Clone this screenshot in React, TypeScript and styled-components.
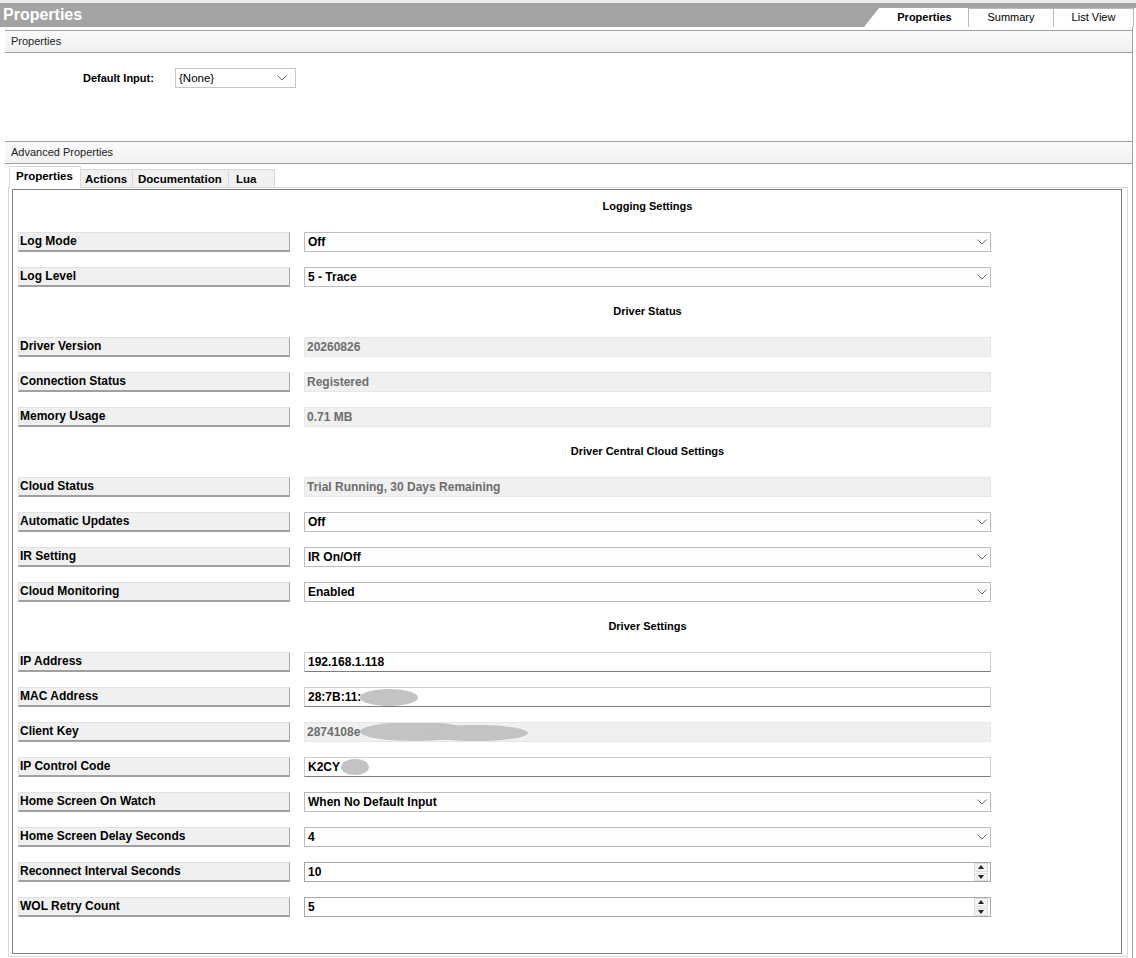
import React from "react";
import styled, { createGlobalStyle } from "styled-components";

const GlobalStyle = createGlobalStyle`
  html, body {
    margin: 0;
    padding: 0;
    background: #fff;
  }
  body {
    font-family: "Liberation Sans", Arial, sans-serif;
    font-size: 12px;
    color: #000;
  }
`;

const Page = styled.div`
  width: 1136px;
  height: 958px;
  overflow: hidden;
  background: #fff;
  border-top: 3px solid #ececec;
  box-sizing: border-box;
`;

const TitleBar = styled.div`
  height: 24px;
  background: #a3a3a3;
  display: flex;
  justify-content: space-between;
  align-items: flex-end;
`;

const Title = styled.div`
  color: #fff;
  font-weight: bold;
  font-size: 16px;
  line-height: 24px;
  padding-left: 3px;
  align-self: stretch;
`;

const TopTabs = styled.div`
  width: 272px;
  height: 19px;
  background: #fff;
  display: flex;
  padding-left: 16px;
  box-sizing: border-box;
  clip-path: polygon(15px 0, 100% 0, 100% 100%, 0 100%);
`;

const TopTab = styled.div<{ $active?: boolean; $w: number; $last?: boolean }>`
  width: ${(p) => p.$w}px;
  box-sizing: border-box;
  font-size: 11px;
  font-weight: ${(p) => (p.$active ? "bold" : "normal")};
  line-height: 17px;
  text-align: center;
  border-top: 1px solid ${(p) => (p.$active ? "transparent" : "#b9b9b9")};
  border-left: 1px solid ${(p) => (p.$active ? "transparent" : "#b9b9b9")};
  border-right: ${(p) => (p.$last ? "1px solid #b9b9b9" : "none")};
`;

const Body = styled.div`
  width: 1133px;
  box-sizing: border-box;
  border-right: 1px solid #a0a0a0;
  padding-left: 5px;
  padding-top: 3px;
  height: 931px;
`;

const SectionHeader = styled.div`
  height: 21px;
  border-top: 1px solid #a0a0a0;
  border-bottom: 1px solid #a0a0a0;
  background: linear-gradient(#fbfbfb, #f1f1f1);
  font-size: 11px;
  color: #222;
  line-height: 20px;
  padding-left: 6px;
`;

const DefaultArea = styled.div`
  height: 88px;
  padding: 15px 0 0 78px;
  box-sizing: border-box;
  display: flex;
  align-items: flex-start;
`;

const DefaultLabel = styled.div`
  width: 92px;
  font-size: 11px;
  font-weight: bold;
  line-height: 21px;
`;

const SmallSelect = styled.div`
  width: 121px;
  height: 20px;
  box-sizing: border-box;
  border: 1px solid #c6c6c6;
  background: #fff;
  font-size: 11.5px;
  line-height: 18px;
  padding: 0 7px 0 3px;
  display: flex;
  justify-content: space-between;
  align-items: center;
`;

const TabControl = styled.div`
  margin-left: 3px;
  margin-top: 2px;
  width: 1120px;
`;

const InnerTabs = styled.div`
  height: 21px;
  display: flex;
  align-items: flex-end;
  padding-left: 1px;
`;

const InnerTab = styled.div<{ $active?: boolean; $w: number; $pad: number }>`
  width: ${(p) => p.$w}px;
  box-sizing: border-box;
  height: ${(p) => (p.$active ? 22 : 18)}px;
  margin-bottom: ${(p) => (p.$active ? -1 : 0)}px;
  position: relative;
  z-index: ${(p) => (p.$active ? 1 : 0)};
  padding-left: ${(p) => p.$pad}px;
  font-size: 11.5px;
  font-weight: bold;
  line-height: ${(p) => (p.$active ? 19 : 18)}px;
  background: ${(p) => (p.$active ? "#fff" : "#f0f0f0")};
  border: 1px solid #d9d9d9;
  border-bottom: none;
  border-left: ${(p) => (p.$active ? "1px solid #d9d9d9" : "none")};
`;

const TabPage = styled.div`
  border: 1px solid #d9d9d9;
  background: #fff;
  padding: 1px 5px 2px 3px;
`;

const Panel = styled.div`
  border: 1px solid #828282;
  padding-bottom: 28px;
`;

const Row = styled.div`
  height: 35px;
  padding: 0 0 3px 5px;
  box-sizing: border-box;
  display: grid;
  grid-template-columns: 272px 687px;
  column-gap: 14px;
  align-items: center;
`;

const Heading = styled.div`
  grid-column: 2;
  text-align: center;
  font-size: 11px;
  font-weight: bold;
`;

const Label = styled.div`
  height: 20px;
  margin-top: 2px;
  box-sizing: border-box;
  background: #f0f0f0;
  border-top: 1px solid #e2e2e2;
  border-left: 1px solid #e2e2e2;
  border-right: 1px solid #a9a9a9;
  border-bottom: 2px solid #a0a0a0;
  font-weight: bold;
  line-height: 16px;
  padding-left: 1px;
  white-space: nowrap;
`;

const Field = styled.div<{ $kind: "select" | "readonly" | "text" | "spin" }>`
  height: 20px;
  margin-top: 2px;
  box-sizing: border-box;
  display: flex;
  align-items: center;
  justify-content: space-between;
  font-weight: bold;
  white-space: nowrap;
  overflow: hidden;
  padding-left: ${(p) => (p.$kind === "readonly" ? 2 : 3)}px;
  padding-right: 2px;
  color: ${(p) => (p.$kind === "readonly" ? "#6d6d6d" : "#000")};
  background: ${(p) =>
    p.$kind === "readonly" ? "#f0f0f0" : p.$kind === "select" ? "#fdfdfd" : "#fff"};
  border: 1px solid
    ${(p) =>
      p.$kind === "readonly"
        ? "#e6e6e6"
        : p.$kind === "select"
        ? "#bdbdbd"
        : p.$kind === "spin"
        ? "#a9a9a9"
        : "#cfcfcf"};
  border-bottom-color: ${(p) =>
    p.$kind === "text" ? "#7d7d7d" : p.$kind === "spin" ? "#a9a9a9" : undefined};
`;

const FieldText = styled.span`
  display: inline-flex;
  align-items: center;
`;

const Chevron = styled.svg`
  width: 10px;
  height: 6px;
  margin-right: 1px;
  flex: none;
`;

const Spinner = styled.div`
  width: 14px;
  height: 18px;
  display: flex;
  flex-direction: column;
  gap: 1px;
  flex: none;
`;

const SpinButton = styled.div`
  flex: 1;
  background: #f4f4f4;
  border: 1px solid #dcdcdc;
  display: flex;
  align-items: center;
  justify-content: center;
`;

const Blob = styled.span<{ $w: number; $h: number; $ml?: number; $mt?: number }>`
  display: inline-block;
  width: ${(p) => p.$w}px;
  height: ${(p) => p.$h}px;
  margin-left: ${(p) => p.$ml ?? 0}px;
  margin-top: ${(p) => p.$mt ?? 0}px;
  border-radius: 50%;
  background: #c3c3c3;
`;

type Item =
  | { type: "heading"; text: string }
  | {
      type: "field";
      label: string;
      kind: "select" | "readonly" | "text" | "spin";
      value: React.ReactNode;
    };

const items: Item[] = [
  { type: "heading", text: "Logging Settings" },
  { type: "field", label: "Log Mode", kind: "select", value: "Off" },
  { type: "field", label: "Log Level", kind: "select", value: "5 - Trace" },
  { type: "heading", text: "Driver Status" },
  { type: "field", label: "Driver Version", kind: "readonly", value: "20260826" },
  { type: "field", label: "Connection Status", kind: "readonly", value: "Registered" },
  { type: "field", label: "Memory Usage", kind: "readonly", value: "0.71 MB" },
  { type: "heading", text: "Driver Central Cloud Settings" },
  {
    type: "field",
    label: "Cloud Status",
    kind: "readonly",
    value: "Trial Running, 30 Days Remaining",
  },
  { type: "field", label: "Automatic Updates", kind: "select", value: "Off" },
  { type: "field", label: "IR Setting", kind: "select", value: "IR On/Off" },
  { type: "field", label: "Cloud Monitoring", kind: "select", value: "Enabled" },
  { type: "heading", text: "Driver Settings" },
  { type: "field", label: "IP Address", kind: "text", value: "192.168.1.118" },
  {
    type: "field",
    label: "MAC Address",
    kind: "text",
    value: (
      <>
        28:7B:11:
        <Blob $w={58} $h={17} $ml={-1} />
      </>
    ),
  },
  {
    type: "field",
    label: "Client Key",
    kind: "readonly",
    value: (
      <>
        2874108e
        <Blob $w={110} $h={19} $ml={0} $mt={-2} />
        <Blob $w={104} $h={16} $ml={-46} $mt={2} />
      </>
    ),
  },
  {
    type: "field",
    label: "IP Control Code",
    kind: "text",
    value: (
      <>
        K2CY
        <Blob $w={28} $h={16} $ml={1} />
      </>
    ),
  },
  {
    type: "field",
    label: "Home Screen On Watch",
    kind: "select",
    value: "When No Default Input",
  },
  { type: "field", label: "Home Screen Delay Seconds", kind: "select", value: "4" },
  { type: "field", label: "Reconnect Interval Seconds", kind: "spin", value: "10" },
  { type: "field", label: "WOL Retry Count", kind: "spin", value: "5" },
];

const ChevronIcon = () => (
  <Chevron viewBox="0 0 10 6">
    <path d="M0.5 0.5 L5 5 L9.5 0.5" fill="none" stroke="#6a6a6a" strokeWidth="1" />
  </Chevron>
);

const SpinArrows = () => (
  <Spinner>
    <SpinButton>
      <svg width="6" height="4" viewBox="0 0 6 4">
        <path d="M0 4 L3 0 L6 4 Z" fill="#222" />
      </svg>
    </SpinButton>
    <SpinButton>
      <svg width="6" height="4" viewBox="0 0 6 4">
        <path d="M0 0 L3 4 L6 0 Z" fill="#222" />
      </svg>
    </SpinButton>
  </Spinner>
);

export default function App() {
  return (
    <>
      <GlobalStyle />
      <Page>
        <TitleBar>
          <Title>Properties</Title>
          <TopTabs>
            <TopTab $active $w={88}>
              Properties
            </TopTab>
            <TopTab $w={85}>Summary</TopTab>
            <TopTab $w={81} $last>
              List View
            </TopTab>
          </TopTabs>
        </TitleBar>
        <Body>
          <SectionHeader>Properties</SectionHeader>
          <DefaultArea>
            <DefaultLabel>Default Input:</DefaultLabel>
            <SmallSelect>
              <span>{"{None}"}</span>
              <ChevronIcon />
            </SmallSelect>
          </DefaultArea>
          <SectionHeader>Advanced Properties</SectionHeader>
          <TabControl>
            <InnerTabs>
              <InnerTab $active $w={72} $pad={6}>
                Properties
              </InnerTab>
              <InnerTab $w={52} $pad={4}>
                Actions
              </InnerTab>
              <InnerTab $w={96} $pad={5}>
                Documentation
              </InnerTab>
              <InnerTab $w={46} $pad={7}>
                Lua
              </InnerTab>
            </InnerTabs>
            <TabPage>
              <Panel>
                {items.map((it, i) =>
                  it.type === "heading" ? (
                    <Row key={i}>
                      <Heading>{it.text}</Heading>
                    </Row>
                  ) : (
                    <Row key={i}>
                      <Label>{it.label}</Label>
                      <Field $kind={it.kind}>
                        <FieldText>{it.value}</FieldText>
                        {it.kind === "select" && <ChevronIcon />}
                        {it.kind === "spin" && <SpinArrows />}
                      </Field>
                    </Row>
                  )
                )}
              </Panel>
            </TabPage>
          </TabControl>
        </Body>
      </Page>
    </>
  );
}
